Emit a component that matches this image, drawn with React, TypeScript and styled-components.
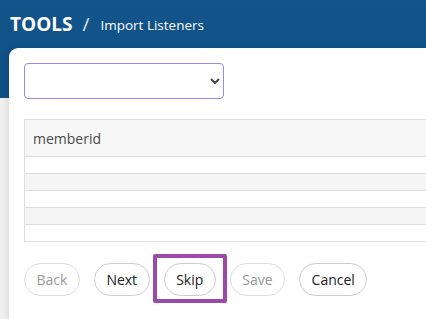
import React from 'react';
import styled, { createGlobalStyle } from 'styled-components';

const GlobalStyle = createGlobalStyle`
    html, body {
        margin: 0;
        padding: 0;
        overflow: hidden;
        background: #f0f0f0;
        font-family: "Open Sans", "Liberation Sans", sans-serif;
    }
`;

const buttons = [
    { label: "Back", disabled: true },
    { label: "Next" },
    { label: "Skip", focused: true },
    { label: "Save", disabled: true },
    { label: "Cancel" },
];

export default function App() {
    const rows = [0, 1, 2, 3, 4];

    return (
        <>
            <GlobalStyle />
            <SPage>
                <STitleBar>
                    <STitle>TOOLS</STitle>
                    <SSlash>/</SSlash>
                    <SSubtitle>Import Listeners</SSubtitle>
                </STitleBar>
                <SPanel>
                    <SSelect defaultValue="">
                        <option value=""></option>
                    </SSelect>
                    <STable>
                        <SHeadRow>
                            <SHeadCell>memberid</SHeadCell>
                        </SHeadRow>
                        {rows.map((r) => (
                            <SRow key={r} $striped={r % 2 === 1}></SRow>
                        ))}
                    </STable>
                    <SButtonRow>
                        {buttons.map((b) => (
                            <SButton key={b.label} disabled={b.disabled} $focused={b.focused}>
                                {b.label}
                            </SButton>
                        ))}
                    </SButtonRow>
                </SPanel>
            </SPage>
        </>
    );
}

const SPage = styled.div`
    width: 100%;
    height: 319px;
    background: linear-gradient(180deg, #13548b 0px, #0f4f85 98px, #f0f0f0 98px);
`;

const STitleBar = styled.div`
    height: 48px;
    display: flex;
    align-items: center;
    padding-left: 10px;
    color: #ffffff;
`;

const STitle = styled.span`
    font-size: 19px;
    font-weight: 700;
`;

const SSlash = styled.span`
    font-size: 19px;
    margin: 0 11px 0 10px;
    color: #dfe7f0;
`;

const SSubtitle = styled.span`
    font-size: 13.5px;
    margin-top: 2px;
`;

const SPanel = styled.div`
    margin-left: 9px;
    width: 620px;
    height: 280px;
    background: #ffffff;
    border-radius: 9px 0 0 0;
    box-shadow: -2px 0 6px rgba(0, 0, 0, 0.08);
    padding: 15px;
    box-sizing: border-box;
`;

const SSelect = styled.select`
    display: block;
    width: 200px;
    height: 36px;
    border: 1px solid #9b86f2;
    border-radius: 4px;
    background: #ffffff;
    color: #444;
    font-family: inherit;
    font-size: 14px;
    padding: 0 6px;
`;

const STable = styled.div`
    margin-top: 20px;
    border: 1px solid #dddddd;
    border-bottom: none;
`;

const SHeadRow = styled.div`
    height: 36px;
    display: flex;
    align-items: center;
    background: #f7f7f7;
    border-bottom: 1px solid #dddddd;
`;

const SHeadCell = styled.span`
    padding-left: 8px;
    font-size: 14px;
    color: #4a4a4a;
`;

const SRow = styled.div<{ $striped?: boolean }>`
    height: 16px;
    background: ${(p) => (p.$striped ? "#f5f5f5" : "#ffffff")};
    border-bottom: 1px solid #dddddd;
`;

const SButtonRow = styled.div`
    display: flex;
    gap: 14px;
    margin-top: 21px;
`;

const SButton = styled.button<{ $focused?: boolean }>`
    position: relative;
    height: 33px;
    padding: 0 11.5px;
    border: 1px solid #cccccc;
    border-radius: 17px;
    background: #ffffff;
    font-family: inherit;
    font-size: 14px;
    font-weight: 500;
    color: #222222;

    &:disabled {
        color: #999999;
        border-color: #dddddd;
    }

    ${(p) =>
        p.$focused &&
        `
        &::after {
            content: "";
            position: absolute;
            top: -10px;
            bottom: -8px;
            left: -12px;
            right: -12px;
            border: 4px solid #9c4aa9;
            border-radius: 2px;
        }
    `}
`;
